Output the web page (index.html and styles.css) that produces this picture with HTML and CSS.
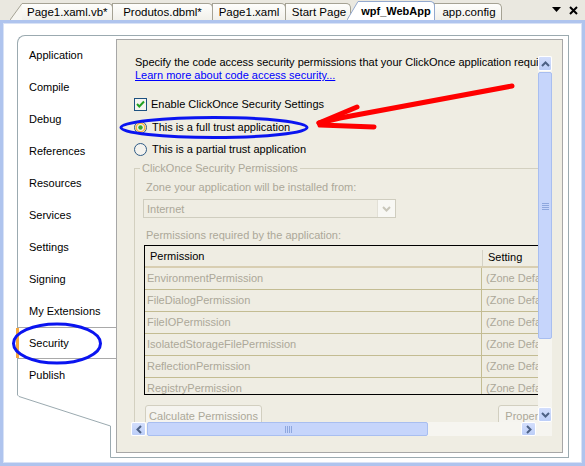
FILE: index.html
```html
<!DOCTYPE html>
<html>
<head>
<meta charset="utf-8">
<link rel="stylesheet" href="styles.css">
</head>
<body>
<div class="tabstrip">
  <div class="tabs">
    <svg class="slant" width="12" height="17" viewBox="0 0 12 17"><polygon points="0,17 12,0.5 12,17" fill="#F7F6F1"/><line x1="0" y1="17" x2="12" y2="0.5" stroke="#A5A294"/></svg>
    <div class="tab first">Page1.xaml.vb*</div>
    <div class="tab t2">Produtos.dbml*</div>
    <div class="tab t3">Page1.xaml</div>
    <div class="tab t4">Start Page</div>
    <svg class="slant act" width="11" height="19" viewBox="0 0 11 19"><polygon points="0,19 11,0.5 11,19" fill="#FFFFFF"/><line x1="0" y1="19" x2="11" y2="0.5" stroke="#93A9CF"/></svg>
    <div class="tab active">wpf_WebApp</div>
    <div class="tab t6">app.config</div>
  </div>
  <div class="tabctl">
    <svg width="9" height="6" viewBox="0 0 9 6"><polygon points="0,0 9,0 4.5,5" fill="#000"/></svg>
    <svg width="9" height="9" viewBox="0 0 9 9"><path d="M1 1 L8 8 M8 1 L1 8" stroke="#000" stroke-width="2"/></svg>
  </div>
</div>
<div class="frame">
  <div class="designer">
    <div class="navcol">
      <ul class="nav">
        <li>Application</li>
        <li>Compile</li>
        <li>Debug</li>
        <li>References</li>
        <li>Resources</li>
        <li>Services</li>
        <li>Settings</li>
        <li>Signing</li>
        <li>My Extensions</li>
        <li class="sel">Security</li>
        <li>Publish</li>
      </ul>
      <svg class="tail" width="99" height="63" viewBox="0 0 99 63"><polyline points="0.5,0 2,1.5 93.5,31 93.5,62.5 99,62.5" fill="none" stroke="#9BAAB0"/></svg>
    </div>
    <div class="pagecol">
      <div class="panel">
        <div class="viewport">
          <div class="content">
            <p class="intro">Specify the code access security permissions that your ClickOnce application requires.</p>
            <a class="link" href="#">Learn more about code access security...</a>
            <div class="row check-row">
              <svg class="box" width="13" height="13" viewBox="0 0 13 13"><rect x="0.5" y="0.5" width="12" height="12" fill="#F4F4F0" stroke="#1C5180"/><path d="M3 6 L5.3 8.5 L10 3.5" fill="none" stroke="#21A121" stroke-width="2"/></svg>
              <span>Enable ClickOnce Security Settings</span>
            </div>
            <div class="row radio-row r1">
              <svg class="box" width="13" height="13" viewBox="0 0 13 13"><circle cx="6.5" cy="6.5" r="6" fill="#F4F3EE" stroke="#2F5B85"/><circle cx="6.5" cy="6.5" r="4.3" fill="none" stroke="#F8B33F" stroke-width="1.6"/><circle cx="6.5" cy="6.5" r="2.2" fill="#36A82E"/></svg>
              <span>This is a full trust application</span>
            </div>
            <div class="row radio-row r2">
              <svg class="box" width="13" height="13" viewBox="0 0 13 13"><circle cx="6.5" cy="6.5" r="6" fill="#F4F3EE" stroke="#2F5B85"/></svg>
              <span>This is a partial trust application</span>
            </div>
            <fieldset class="group">
              <legend>ClickOnce Security Permissions</legend>
              <div class="dis zone">Zone your application will be installed from:</div>
              <div class="combo">
                <span class="dis">Internet</span>
                <span class="drop"><svg width="9" height="6" viewBox="0 0 9 6"><path d="M1 1 L4.5 4.5 L8 1" fill="none" stroke="#C9C7BA" stroke-width="2"/></svg></span>
              </div>
              <div class="dis perms">Permissions required by the application:</div>
              <div class="tbl">
                <div class="trow head"><div class="c1">Permission</div><div class="c2">Setting</div></div>
                <div class="trow"><div class="c1">EnvironmentPermission</div><div class="c2">(Zone Default)</div></div>
                <div class="trow"><div class="c1">FileDialogPermission</div><div class="c2">(Zone Default)</div></div>
                <div class="trow"><div class="c1">FileIOPermission</div><div class="c2">(Zone Default)</div></div>
                <div class="trow"><div class="c1">IsolatedStorageFilePermission</div><div class="c2">(Zone Default)</div></div>
                <div class="trow"><div class="c1">ReflectionPermission</div><div class="c2">(Zone Default)</div></div>
                <div class="trow"><div class="c1">RegistryPermission</div><div class="c2">(Zone Default)</div></div>
              </div>
              <div class="buttons">
                <div class="btn calc">Calculate Permissions</div>
                <div class="btn props">Properties...</div>
              </div>
            </fieldset>
          </div>
          <div class="vscroll">
            <div class="sbtn"><svg width="9" height="6" viewBox="0 0 9 6"><path d="M1 5 L4.5 1.5 L8 5" fill="none" stroke="#4D6185" stroke-width="2"/></svg></div>
            <div class="vthumb"><svg width="7" height="8" viewBox="0 0 7 8"><path d="M0 1.5 H7 M0 3.5 H7 M0 5.5 H7 M0 7.5 H7" stroke="#8EA7DE"/></svg></div>
            <div class="sbtn down"><svg width="9" height="6" viewBox="0 0 9 6"><path d="M1 1 L4.5 4.5 L8 1" fill="none" stroke="#4D6185" stroke-width="2"/></svg></div>
          </div>
          <div class="hscroll">
            <div class="sbtn h"><svg width="6" height="9" viewBox="0 0 6 9"><path d="M5 1 L1.5 4.5 L5 8" fill="none" stroke="#4D6185" stroke-width="2"/></svg></div>
            <div class="hthumb"><svg width="8" height="7" viewBox="0 0 8 7"><path d="M1.5 0 V7 M3.5 0 V7 M5.5 0 V7 M7.5 0 V7" stroke="#8EA7DE"/></svg></div>
            <div class="sbtn h right"><svg width="6" height="9" viewBox="0 0 6 9"><path d="M1 1 L4.5 4.5 L1 8" fill="none" stroke="#4D6185" stroke-width="2"/></svg></div>
          </div>
          <div class="corner"></div>
        </div>
      </div>
    </div>
  </div>
</div>
<svg class="annot" width="585" height="466" viewBox="0 0 585 466">
  <ellipse cx="214" cy="127.5" rx="93" ry="10" fill="none" stroke="#0A14F0" stroke-width="3"/>
  <ellipse cx="57" cy="343.5" rx="43.5" ry="19.5" fill="none" stroke="#0A14F0" stroke-width="3"/>
  <g stroke="#FF0000" stroke-width="5" stroke-linecap="round" fill="none">
    <path d="M512 86 L340 118 L319 123"/>
    <path d="M357 107 L319 123"/>
    <path d="M320 125 L374 127"/>
  </g>
</svg>
</body>
</html>
```
FILE: styles.css
```css
* { box-sizing: border-box; }
html, body {
  margin: 0;
  width: 585px;
  height: 466px;
  overflow: hidden;
}
body {
  position: relative;
  background: #EAE8E0;
  font-family: "Liberation Sans", Arial, sans-serif;
  font-size: 11px;
  color: #000;
}

/* ---------- tab strip ---------- */
.tabstrip {
  height: 20px;
  display: flex;
  align-items: flex-end;
}
.tabs {
  display: flex;
  align-items: flex-end;
  padding-left: 10px;
  height: 20px;
  font-size: 11.5px;
}
.slant { display: block; flex: none; }
.slant.act { margin-left: -4px; position: relative; z-index: 2; }
.tab {
  flex: none;
  height: 17px;
  line-height: 16px;
  border: 1px solid #A5A294;
  border-bottom: 0;
  border-radius: 0 5px 0 0;
  background: linear-gradient(#FEFEFC, #F1F0EA);
  margin-left: -1px;
  white-space: nowrap;
  text-align: center;
}
.tab.first {
  width: 91px;
  border-left: 0;
  margin-left: 0;
  text-align: left;
  padding-left: 5px;
}
.tab.t2 { width: 101px; }
.tab.t3 { width: 74px; }
.tab.t4 { width: 66px; padding-left: 2px; }
.tab.active {
  width: 77px;
  height: 19px;
  line-height: 18px;
  font-size: 11px;
  border-color: #93A9CF;
  border-left: 0;
  background: #FFFFFF;
  font-weight: bold;
  margin-left: 0;
  position: relative;
  z-index: 2;
}
.tab.t6 { width: 68px; padding-left: 2px; }
.tabctl {
  margin-left: auto;
  display: flex;
  align-items: center;
  gap: 8px;
  height: 20px;
  padding-right: 7px;
}
.tabctl svg { display: block; }

/* ---------- frame ---------- */
.frame {
  height: 446px;
  border: 3px solid #AFC4EE;
  background: #FFFFFF;
  padding: 12px 13px 5px 14px;
  box-shadow: inset 0 0 0 1px #D8E2F6;
}
.designer {
  display: flex;
  height: 100%;
}
.navcol {
  width: 99px;
  display: flex;
  flex-direction: column;
}
.nav {
  list-style: none;
  margin: 0;
  padding: 3px 0 4px;
  border-left: 1px solid #9BAAB0;
  border-top: 1px solid #9BAAB0;
  border-top-left-radius: 8px;
}
.nav li {
  height: 32px;
  line-height: 32px;
  padding-left: 11px;
  white-space: nowrap;
}
.nav li.sel {
  position: relative;
  background: #FFFFFF;
  border-top: 1px solid #A9A9A9;
  border-bottom: 1px solid #A9A9A9;
  line-height: 30px;
}
.nav li.sel::before {
  content: "";
  position: absolute;
  left: -2px;
  top: 0;
  bottom: 0;
  width: 3px;
  background: #F5A73C;
}
.tail { display: block; flex: 1; }

.pagecol {
  flex: 1;
  border-top: 1px solid #9BAAB0;
  border-right: 1px solid #9BAAB0;
  border-bottom: 1px solid #9BAAB0;
  padding: 3px 5px 4px 0;
}
.panel {
  height: 100%;
  border: 1px solid #A7A7A7;
  background: #EFEDE3;
  padding: 16px 0 0 14px;
}
.viewport {
  display: grid;
  grid-template-columns: 407px 14px;
  grid-template-rows: 366px 14px;
  width: 421px;
}

/* ---------- content ---------- */
.content {
  overflow: hidden;
  padding-left: 4px;
  white-space: nowrap;
}
.intro {
  margin: 0;
  line-height: 13px;
}
.link {
  display: block;
  line-height: 13px;
  color: #0000FF;
  text-decoration: underline;
}
.row {
  display: flex;
  align-items: center;
  height: 16px;
  margin-left: -1px;
}
.row .box { display: block; flex: none; }
.check-row { margin-top: 14px; gap: 4px; }
.radio-row { gap: 5px; }
.r1 { margin-top: 7px; }
.r2 { margin-top: 6px; }

.dis { color: #ACA899; }

.group {
  margin: 5px 0 0 -1px;
  padding: 0 0 30px 11px;
  border: 1px solid #D3D0C0;
  width: 470px;
  min-width: 0;
}
.group legend {
  color: #ACA899;
  line-height: 13px;
  padding: 0 2px;
  margin-left: -6px;
}
.zone {
  margin-top: 6px;
  line-height: 13px;
}
.combo {
  margin: 5px 0 0 -3px;
  width: 253px;
  height: 19px;
  border: 1px solid #CFCDBF;
  display: flex;
  align-items: center;
  justify-content: space-between;
  padding-left: 3px;
}
.drop {
  width: 18px;
  height: 17px;
  background: #F8F8F4;
  border-left: 1px solid #E2E0D6;
  display: flex;
  align-items: center;
  justify-content: center;
}
.drop svg { display: block; }
.perms {
  margin-top: 11px;
  line-height: 13px;
}

.tbl {
  margin: 3px 0 0 -2px;
  width: 440px;
  height: 150px;
  overflow: hidden;
  border-top: 1px solid #000;
  border-left: 1px solid #000;
  border-bottom: 1px solid #000;
}
.trow {
  display: flex;
  height: 22px;
  border-bottom: 1px solid #C3BC92;
  color: #ACA899;
}
.trow .c1 {
  width: 337px;
  padding-left: 2px;
  line-height: 21px;
  border-right: 1px solid #C3BC92;
}
.trow .c2 {
  padding-left: 4px;
  line-height: 21px;
}
.trow.head {
  color: #000;
  border-bottom: 2px solid #D8CEB2;
}
.trow.head .c1 {
  padding-left: 5px;
  line-height: 20px;
  border-right: 0;
}
.trow.head .c2 {
  padding-left: 5px;
  margin-top: 4px;
  line-height: 14px;
  height: 16px;
  border-left: 1px solid #D4D1C5;
}

.buttons {
  margin: 10px 0 0 -1px;
  width: 427px;
  display: flex;
  justify-content: space-between;
}
.btn {
  height: 22px;
  line-height: 20px;
  border: 1px solid #D2CFC0;
  border-radius: 3px;
  background: #F5F4EF;
  color: #ACA899;
  text-align: center;
}
.calc { width: 117px; }
.props { width: 74px; }

/* ---------- scrollbars ---------- */
.vscroll {
  background: #F6F5F0;
  display: flex;
  flex-direction: column;
}
.sbtn {
  height: 15px;
  background: linear-gradient(#D3DEFC, #BCCEF8);
  border: 1px solid #FFFFFF;
  border-radius: 2px;
  display: flex;
  align-items: center;
  justify-content: center;
  flex: none;
}
.sbtn svg { display: block; }
.sbtn.down { margin-top: auto; }
.vthumb {
  margin-top: 1px;
  height: 267px;
  background: #C6D5FB;
  border: 1px solid #A8BEF0;
  border-radius: 2px;
  display: flex;
  align-items: center;
  justify-content: center;
}
.vthumb svg, .hthumb svg { display: block; }
.hscroll {
  background: #F6F5F0;
  display: flex;
}
.sbtn.h {
  width: 15px;
  height: 14px;
}
.sbtn.h.right { margin-left: auto; margin-right: 2px; }
.hthumb {
  margin-left: 1px;
  width: 281px;
  background: #C6D5FB;
  border: 1px solid #A8BEF0;
  border-radius: 2px;
  display: flex;
  align-items: center;
  justify-content: center;
}
.corner { background: #F6F5F0; }

/* ---------- annotations ---------- */
.annot {
  position: absolute;
  left: 0;
  top: 0;
  pointer-events: none;
}
```
